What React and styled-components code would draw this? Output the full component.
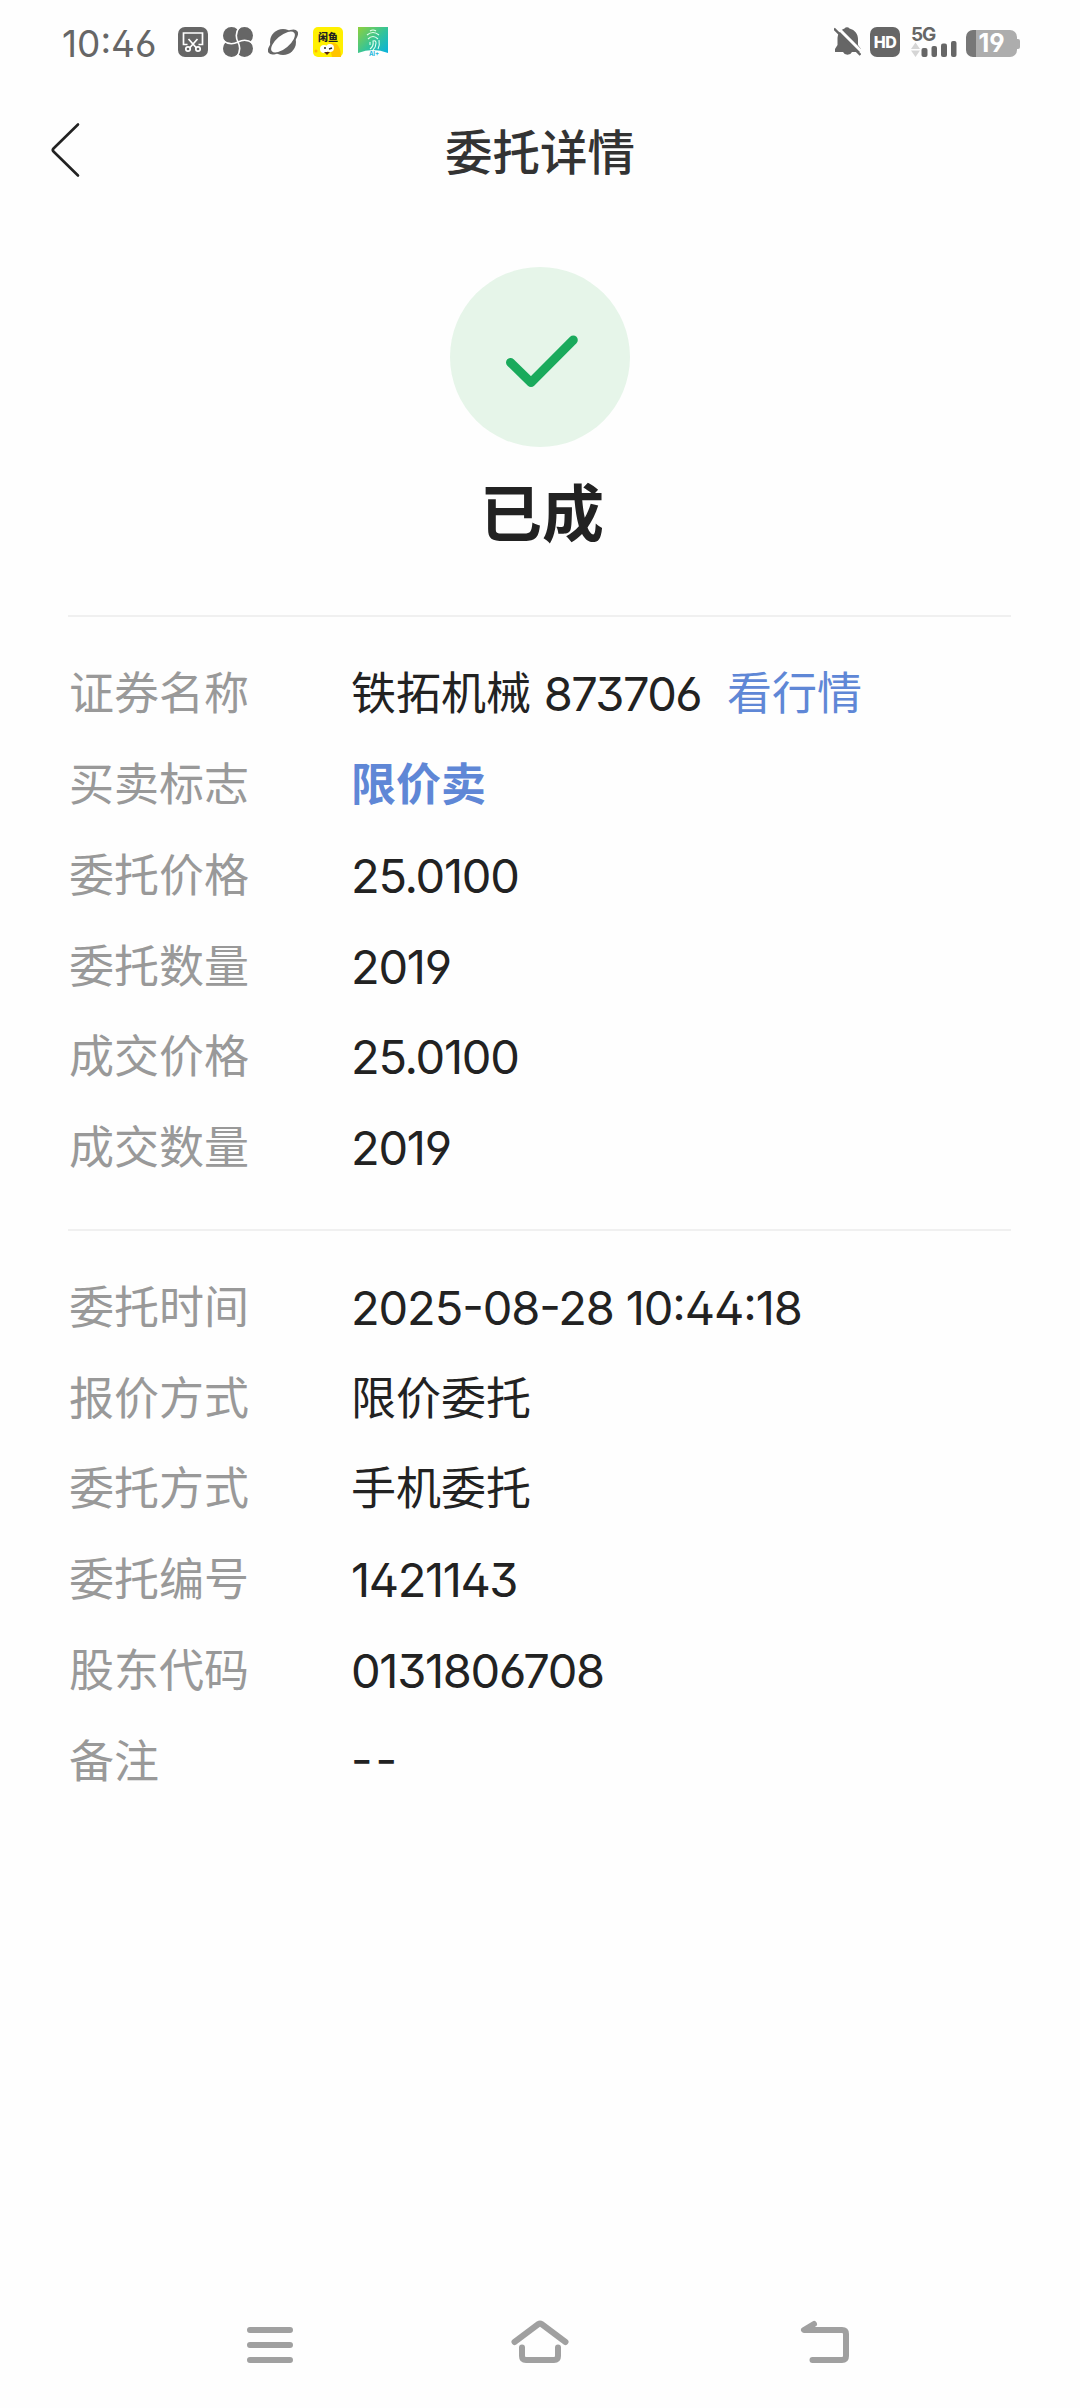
import styled, { createGlobalStyle } from 'styled-components';

const GlobalStyle = createGlobalStyle`
  * {
    box-sizing: border-box;
  }

  body {
    margin: 0;
    background: #fefefe;
    font-family: Inter, 'Noto Sans CJK SC', sans-serif;
    font-feature-settings: 'ss01' 1, 'cv03' 1, 'cv04' 1, 'case' 1;
  }
`;

const Screen = styled.div`
  display: flex;
  flex-direction: column;
  width: 1080px;
  height: 2408px;
  background: #fefefe;
  overflow: hidden;
`;

const StatusBar = styled.div`
  display: flex;
  align-items: center;
  justify-content: space-between;
  height: 84px;
  padding: 0 60px 0 62px;
`;

const StatusGroup = styled.div`
  display: flex;
  align-items: center;
  gap: ${(props) => props.$gap}px;
`;

const Clock = styled.span`
  width: 101px;
  font-size: 37px;
  line-height: 40px;
  padding-top: 4px;
  color: #666;
  white-space: nowrap;
`;

const HdBadge = styled.span`
  width: 30px;
  height: 30px;
  border-radius: 7px;
  background: #666;
  color: #fff;
  font-size: 16px;
  line-height: 30px;
  font-weight: 800;
  letter-spacing: -0.6px;
  text-align: center;
`;

const Signal = styled.div`
  display: flex;
  flex-direction: column;
  width: 48px;
  height: 30px;
  padding-left: 2px;
`;

const Network = styled.span`
  height: 15px;
  font-size: 19px;
  line-height: 16px;
  font-weight: 700;
  letter-spacing: -1.2px;
  color: #666;
`;

const Battery = styled.div`
  display: flex;
  align-items: center;
  width: 54px;
  height: 30px;
  padding-top: 3px;

  &::after {
    content: '';
    width: 3px;
    height: 10px;
    border-radius: 0 2px 2px 0;
    background: #adadad;
  }
`;

const BatteryCell = styled.span`
  width: 51px;
  height: 27px;
  border-radius: 7px;
  background: linear-gradient(90deg, #777 10px, #adadad 10px);
  color: #fff;
  font-size: 25px;
  line-height: 27px;
  font-weight: 700;
  text-align: center;
`;

const Header = styled.header`
  display: grid;
  grid-template-columns: 100px 1fr 100px;
  align-items: center;
  height: 132px;
`;

const BackButton = styled.button`
  display: flex;
  padding: 0 0 0 50px;
  border: 0;
  background: none;
`;

const Title = styled.h1`
  margin: 0;
  padding-top: 5px;
  font-size: 47.5px;
  line-height: 60px;
  font-weight: 500;
  text-align: center;
  color: #333;
`;

const Result = styled.section`
  display: flex;
  flex-direction: column;
  align-items: center;
  height: 399px;
  padding-top: 51px;
`;

const ResultBadge = styled.div`
  display: flex;
  width: 180px;
  height: 180px;
  border-radius: 50%;
  background: #e6f5e9;
`;

const ResultText = styled.div`
  margin-top: 23px;
  padding-left: 4px;
  font-size: 62px;
  line-height: 90px;
  font-weight: 700;
  color: #222;
`;

const Details = styled.dl`
  display: flex;
  flex-direction: column;
  margin: 0 69px 0 68px;
  padding: ${(props) => props.$padding};
  border-top: 2px solid #f0f0f0;
`;

const Row = styled.div`
  display: grid;
  grid-template-columns: 282px 1fr;
  align-items: center;
  height: 90.75px;
  padding-left: 1px;
  font-size: 45px;
  line-height: 60px;
`;

const Label = styled.dt`
  color: #999;
`;

const Value = styled.dd`
  display: flex;
  align-items: center;
  margin: 0;
  color: ${(props) => (props.$accent ? '#5f87d6' : '#222')};
  font-weight: ${(props) => (props.$accent ? 700 : 400)};
  white-space: pre;
`;

const Digits = styled.span`
  font-size: 47px;
  letter-spacing: ${(props) => props.$tracking ?? -1.25}px;
`;

const QuoteLink = styled.a`
  margin-left: 26px;
  color: #5f87d6;
`;

const NavBar = styled.nav`
  display: flex;
  justify-content: space-between;
  align-items: center;
  height: 130px;
  margin-top: auto;
  padding: 0 225px 0 240px;
`;

const NavIcon = styled.svg.attrs({ width: 60, height: 60, viewBox: '0 0 60 60' })`
  fill: none;
  stroke: #a0a0a0;
  stroke-width: 6px;
  stroke-linecap: round;
  stroke-linejoin: round;
  margin-right: ${(props) => props.$space || 0}px;
`;

const ScreenshotIcon = () => (
  <svg width="30" height="30" viewBox="0 0 30 30" fill="none" stroke="#fff" strokeWidth="1.700">
    <rect width="30" height="30" rx="7" fill="#666" stroke="none" />
    <path d="M9.500 17.500H5.500V6H24.500V17.500H20.500" />
    <path d="M10.500 12l8 9M19.500 12l-8 9" />
    <circle cx="10" cy="22" r="2.200" />
    <circle cx="20" cy="22" r="2.200" />
  </svg>
);

const FanIcon = () => (
  <svg width="30" height="30" viewBox="0 0 30 30">
    <g fill="#666">
      <circle cx="8.500" cy="8.500" r="8.500" />
      <circle cx="21.500" cy="8.500" r="8.500" />
      <circle cx="8.500" cy="21.500" r="8.500" />
      <circle cx="21.500" cy="21.500" r="8.500" />
    </g>
    <path
      d="M16.500 0c-4 5-4 10-1.500 15M30 16.500c-5-4-10-4-15-1.500M13.500 30c4-5 4-10 1.500-15M0 13.500c5 4 10 4 15 1.500"
      fill="none"
      stroke="#fefefe"
      strokeWidth="1.600"
    />
  </svg>
);

const PlanetIcon = () => (
  <svg width="30" height="30" viewBox="0 0 30 30">
    <circle cx="15" cy="15" r="13" fill="#666" />
    <ellipse cx="15" cy="15" rx="18" ry="7.500" transform="rotate(-37 15 15)" fill="#666" />
    <ellipse cx="15" cy="15" rx="14.500" ry="6.500" transform="rotate(-40 15 15)" fill="#fefefe" />
  </svg>
);

const FishIcon = () => (
  <svg width="30" height="30" viewBox="0 0 30 30">
    <rect width="30" height="30" rx="5" fill="#fff000" />
    <path d="M16 17c6-4 12 1 12 13h-9z" fill="#ffc400" />
    <text x="15" y="13.500" textAnchor="middle" fontSize="10" fontWeight="900" fill="#222">闲鱼</text>
    <circle cx="11" cy="22" r="4" fill="#fff" />
    <circle cx="17" cy="21" r="4" fill="#fff" />
    <path d="M11 21h2M16 22l3-1" stroke="#222" strokeWidth="1.500" />
    <path d="M11 25h6l-3 3z" fill="#5a2612" />
    <circle cx="3" cy="24" r="1.500" fill="#ffb400" />
  </svg>
);

const FingerprintIcon = () => (
  <svg width="30" height="30" viewBox="0 0 30 30">
    <defs>
      <linearGradient id="print" x1="0" y1="0" x2="1" y2="1">
        <stop offset="0" stopColor="#8fd03c" />
        <stop offset="0.500" stopColor="#35c498" />
        <stop offset="1" stopColor="#00aeea" />
      </linearGradient>
    </defs>
    <rect width="30" height="30" fill="url(#print)" />
    <path
      d="M12 4q3-2 6 0M9 8q6-5 12 0M10 12q5-5 10 0M12 15v3M12 22q4-3 3-8 3-1 3 2 0 4-3 7M21 13q1 5-1 9"
      fill="none"
      stroke="#e4fff0"
      strokeWidth="1.100"
    />
    <path d="M0 26Q15 20 30 26V30H0z" fill="#fefefe" />
    <text x="16" y="28.500" textAnchor="middle" fontSize="6" fontWeight="700" fill="#19b5dc">AI+</text>
  </svg>
);

const MutedIcon = () => (
  <svg width="27" height="30" viewBox="0 0 27 30">
    <path
      d="M10.500 1.500a3 3 0 0 1 5 0C21 3 24 7 24 12v6l3 4v3H18a5 5 0 0 1-9 0H1v-3l2.500-4v-6C3.500 7 6 3 10.500 1.500z"
      fill="#666"
    />
    <path d="M2 -1L28 25" stroke="#fefefe" strokeWidth="3" />
    <path d="M0 1.500L26.500 28" stroke="#666" strokeWidth="2.400" />
  </svg>
);

const SignalBars = () => (
  <svg width="46" height="15" viewBox="0 15 46 15" fill="#666" overflow="visible">
    <path d="M4.500 15.500l4.500 6.500H0zM0 23.500h9l-4.500 6.500z" fill="#d5d5d5" />
    <rect x="10.500" y="21" width="6" height="9" rx="2" />
    <rect x="20.500" y="19" width="5.500" height="11" rx="2" />
    <rect x="30" y="16.500" width="6" height="13.500" rx="2" />
    <rect x="40" y="14" width="5.500" height="16" rx="2" />
  </svg>
);

const summary = [
  { label: '证券名称', name: '铁拓机械', digits: '873706', tracking: -1.6, link: '看行情' },
  { label: '买卖标志', text: '限价卖', accent: true },
  { label: '委托价格', digits: '25.0100' },
  { label: '委托数量', digits: '2019' },
  { label: '成交价格', digits: '25.0100' },
  { label: '成交数量', digits: '2019' },
];

const extra = [
  { label: '委托时间', digits: '2025-08-28 10:44:18', tracking: -1.1 },
  { label: '报价方式', text: '限价委托' },
  { label: '委托方式', text: '手机委托' },
  { label: '委托编号', digits: '1421143', tracking: -1.4 },
  { label: '股东代码', digits: '0131806708', tracking: -1.3 },
  { label: '备注', digits: '--', tracking: 3 },
];

const DetailRow = ({ item }) => (
  <Row>
    <Label>{item.label}</Label>
    <Value $accent={item.accent}>
      {item.name && `${item.name} `}
      {item.text}
      {item.digits && <Digits $tracking={item.tracking}>{item.digits}</Digits>}
      {item.link && <QuoteLink>{item.link}</QuoteLink>}
    </Value>
  </Row>
);

const App = () => {
  return (
    <Screen>
      <GlobalStyle />
      <StatusBar>
        <StatusGroup $gap={15}>
          <Clock>10:46</Clock>
          <ScreenshotIcon />
          <FanIcon />
          <PlanetIcon />
          <FishIcon />
          <FingerprintIcon />
        </StatusGroup>
        <StatusGroup $gap={9}>
          <MutedIcon />
          <HdBadge>HD</HdBadge>
          <Signal>
            <Network>5G</Network>
            <SignalBars />
          </Signal>
          <Battery>
            <BatteryCell>19</BatteryCell>
          </Battery>
        </StatusGroup>
      </StatusBar>

      <Header>
        <BackButton>
          <svg width="30" height="56" viewBox="0 0 30 56" fill="none" stroke="#222" strokeWidth="2.600" strokeLinecap="round" strokeLinejoin="round">
            <path d="M28 2.500L3.500 26.500Q2 28 3.500 29.500L28 53.500" />
          </svg>
        </BackButton>
        <Title>委托详情</Title>
      </Header>

      <Result>
        <ResultBadge>
          <svg width="180" height="180" viewBox="0 0 180 180" fill="none" stroke="#1aaa5c" strokeWidth="9" strokeLinecap="round" strokeLinejoin="round">
            <path d="M60.500 95.500L81 115.500L123.300 73" />
          </svg>
        </ResultBadge>
        <ResultText>已成</ResultText>
      </Result>

      <Details $padding="32px 0 35px">
        {summary.map((item) => (
          <DetailRow key={item.label} item={item} />
        ))}
      </Details>
      <Details $padding="32px 0 0">
        {extra.map((item) => (
          <DetailRow key={item.label} item={item} />
        ))}
      </Details>

      <NavBar>
        <NavIcon>
          <path d="M10 17H50M10 32H50M10 47H50" />
        </NavIcon>
        <NavIcon $space={15}>
          <path d="M4.500 29L28.500 11Q30 10 31.500 11L55.500 29M12 34.500V43Q12 47 16 47H44Q48 47 48 43V34.500" />
        </NavIcon>
        <NavIcon>
          <path d="M19 11L9 17H47Q51 17 51 21V43Q51 47 47 47H17.500" />
        </NavIcon>
      </NavBar>
    </Screen>
  );
};

export default App;
